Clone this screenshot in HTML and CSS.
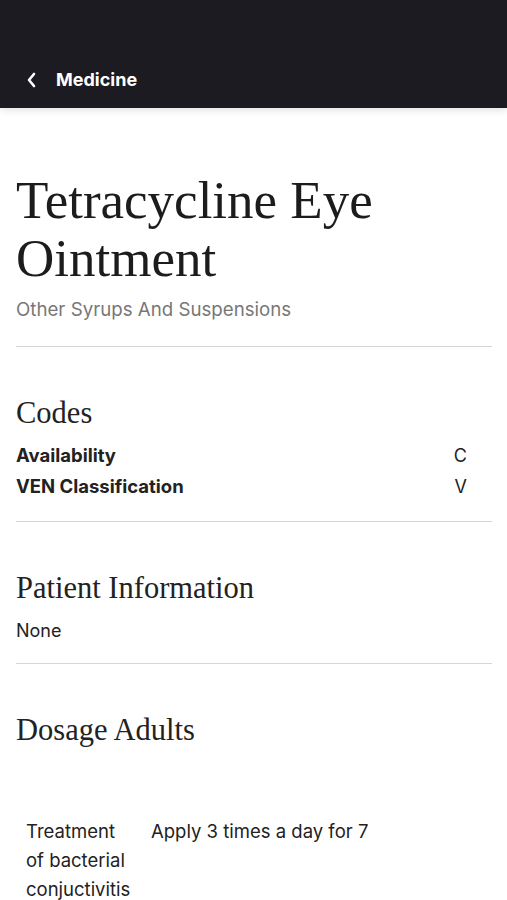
FILE: index.html
```html
<!DOCTYPE html>
<html lang="en">
<head>
  <meta charset="UTF-8">
  <meta name="viewport" content="width=device-width, initial-scale=1.0">
  <title>Medicine</title>
  <link rel="stylesheet" href="styles.css">
</head>
<body>
  <header class="top-bar">
    <a href="#" class="back-link">
      <svg class="back-icon" width="12" height="16" viewBox="0 0 12 16">
        <path d="M8 2 L3 8 L8 14" fill="none" stroke="#fff" stroke-width="2.6" stroke-linecap="round" stroke-linejoin="round"/>
      </svg>
      <span>Medicine</span>
    </a>
  </header>

  <main class="content">
    <section class="intro">
      <h1 class="med-name">Tetracycline Eye Ointment</h1>
      <p class="med-group">Other Syrups And Suspensions</p>
    </section>

    <section class="block">
      <h2>Codes</h2>
      <div class="code-row">
        <span class="code-label">Availability</span>
        <span class="code-value">C</span>
      </div>
      <div class="code-row">
        <span class="code-label">VEN Classification</span>
        <span class="code-value">V</span>
      </div>
    </section>

    <section class="block info">
      <h2>Patient Information</h2>
      <p class="plain">None</p>
    </section>

    <section class="block last">
      <h2>Dosage Adults</h2>
      <table class="dosage-table">
        <tr>
          <td class="indication">Treatment of bacterial conjuctivitis</td>
          <td>Apply 3 times a day for 7</td>
        </tr>
      </table>
    </section>
  </main>
</body>
</html>
```

FILE: styles.css
```css
body {
  margin: 0;
  padding: 0;
  font-family: Inter, "Liberation Sans", Arial, sans-serif;
  color: #222;
  background-color: #fff;
}
.top-bar {
  height: 108px;
  background-color: #1c1b21;
  box-shadow: 0 2px 8px rgba(0, 0, 0, 0.12);
  display: flex;
  align-items: flex-end;
  padding: 0 0 18px 26px;
  box-sizing: border-box;
}
.back-link {
  display: flex;
  align-items: center;
  gap: 18px;
  color: white;
  text-decoration: none;
  font-weight: 700;
  font-size: 18px;
}
.content {
  padding: 0 15px 0 16px;
}
.intro {
  padding-top: 63px;
  padding-bottom: 25px;
  border-bottom: 1px solid #d6d6d6;
}
.med-name {
  font-family: "Liberation Serif", "Times New Roman", serif;
  font-weight: normal;
  font-size: 53px;
  line-height: 58px;
  margin: 0;
  color: #1c1c1c;
}
.med-group {
  margin: 11px 0 0;
  font-size: 18.7px;
  color: #777;
}
.block {
  padding: 49px 0 19px;
  border-bottom: 1px solid #d6d6d6;
}
.block.info {
  padding-bottom: 17px;
}
.block.last {
  border-bottom: none;
}
.block h2 {
  font-family: "Liberation Serif", "Times New Roman", serif;
  font-weight: normal;
  font-size: 30.5px;
  line-height: 34px;
  margin: 0 0 10px;
  color: #222;
}
.code-row {
  display: flex;
  justify-content: space-between;
  font-size: 18px;
  line-height: 31px;
  padding-right: 25px;
}
.code-label {
  font-weight: 700;
  font-size: 18.5px;
}
.plain {
  margin: 0;
  font-size: 18px;
  line-height: 31px;
}
.dosage-table {
  margin-top: 70px;
  border-collapse: collapse;
  font-size: 18.5px;
  line-height: 29px;
}
.dosage-table td {
  vertical-align: top;
  padding: 0 10px 0 0;
}
.dosage-table .indication {
  width: 106px;
  padding: 0 19px 0 10px;
}
```
